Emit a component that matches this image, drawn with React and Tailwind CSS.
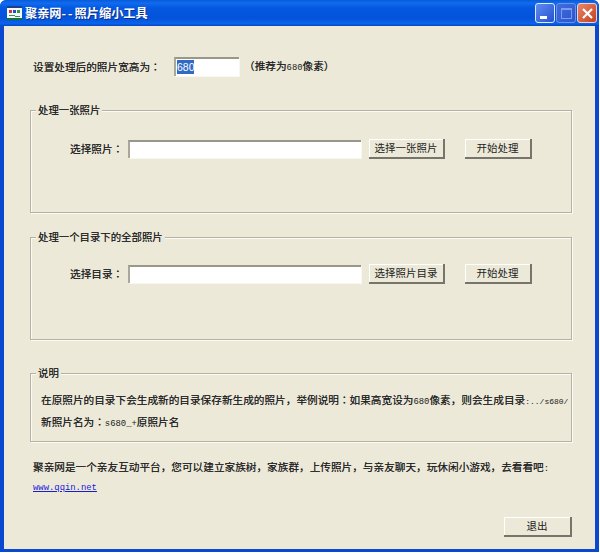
import React from 'react';

const cjk = { fontFamily: '"Noto Sans CJK SC", "Liberation Sans", sans-serif' };

// the original uses half width latin, a mono font gets close
function Latin({ className = 'text-[8.9px]', children }) {
  return <span className={`font-['Liberation_Mono'] [text-shadow:none] ${className}`}>{children}</span>;
}

// centred full width colon, the TC face has it in the middle of the cell
function Colon() {
  return <span className="font-['Noto_Sans_CJK_TC']">：</span>;
}

function TextBox({ className, children }) {
  return (
    <div className={`bg-white border-t-2 border-l-2 border-t-[#99968a] border-l-[#aaa79a] shadow-[1px_1px_0_#f8f7f0] ${className}`}>
      {children}
    </div>
  );
}

function WinButton({ className, children }) {
  return (
    <button className={`flex items-center justify-center bg-[#ece9d8] text-[10.5px] leading-none text-[#222] border-r-2 border-b-2 border-r-[#77756b] border-b-[#77756b] shadow-[inset_1px_1px_0_#fff] ${className}`}>
      {children}
    </button>
  );
}

function Group({ title, className, children }) {
  return (
    <div className={`relative ml-[26px] w-[542px] border border-[#b4b2a4] shadow-[1px_1px_0_#fbfaf4,inset_1px_1px_0_#fbfaf4] ${className}`}>
      <span className="absolute left-[5px] top-[-8px] bg-[#ece9d8] px-[2px] text-[10.4px] leading-[14px] text-[#222]">{title}</span>
      {children}
    </div>
  );
}

function PickRow({ label, button }) {
  return (
    <div className="flex items-center">
      <span className="ml-[39px] w-[58px] text-[10.65px] leading-[14px] text-[#222]">{label}<Colon /></span>
      <TextBox className="w-[233px] h-[18px]" />
      <WinButton className="ml-[8px] w-[76px] h-[20px]">{button}</WinButton>
      <WinButton className="ml-[20px] w-[67px] h-[20px]">开始处理</WinButton>
    </div>
  );
}

function AppIcon() {
  return (
    <svg width="15" height="14" viewBox="0 0 15 14">
      <rect x="0" y="0" width="15" height="14" fill="#f4f8ff" />
      <rect x="0" y="0" width="15" height="2" fill="#1a3f8f" />
      <rect x="2" y="4" width="3" height="3" fill="#d63a2a" />
      <rect x="6" y="4" width="3" height="3" fill="#2a49c4" />
      <rect x="10" y="4" width="3" height="3" fill="#2f9a3c" />
      <rect x="2" y="9" width="6" height="1" fill="#2f9a3c" />
      <rect x="8" y="10" width="5" height="1" fill="#2f9a3c" />
      <rect x="0" y="12" width="15" height="2" fill="#16703a" />
    </svg>
  );
}

function TitleBar() {
  return (
    <div className="flex h-[26px] items-center rounded-t-[6px] bg-[linear-gradient(180deg,#0a5ad8_0%,#0f6cf0_12%,#0558e0_30%,#0453da_70%,#0a62ec_90%,#0348c0_100%)] pl-[7px] pr-[2px]">
      <AppIcon />
      <span className="ml-[3px] text-[12.2px] font-bold leading-none text-white [text-shadow:1px_1px_0_#0a2f8a]">
        聚亲网<span className="tracking-[2px]">--</span>照片缩小工具
      </span>
      <div className="ml-auto flex gap-[1px]">
        <div className="relative flex h-[20px] w-[20px] items-end rounded-[3px] border border-[#dfe8fa] bg-[linear-gradient(135deg,#5f8df0,#2550d0)] pb-[3px] pl-[4px]">
          <div className="h-[3px] w-[7px] bg-white" />
        </div>
        <div className="flex h-[20px] w-[20px] items-center justify-center rounded-[3px] border border-[#6f92e6] bg-[linear-gradient(135deg,#3f6ee0,#2a55cf)]">
          <div className="h-[11px] w-[11px] border border-t-2 border-[#7e9ce8]" />
        </div>
        <div className="flex h-[20px] w-[20px] items-center justify-center rounded-[3px] border border-[#f0d4c8] bg-[linear-gradient(135deg,#e8866a,#c8401c)]">
          <svg width="13" height="13" viewBox="0 0 13 13">
            <path d="M2 2 L11 11 M11 2 L2 11" stroke="#fff" strokeWidth="2.2" />
          </svg>
        </div>
      </div>
    </div>
  );
}

export default function App() {
  return (
    <div className="h-[553px] w-[600px] bg-white [text-shadow:0_0_0.3px_#555]" style={cjk}>
      <div className="h-[552px] w-[599px] overflow-hidden rounded-t-[6px] bg-[#0a48d0]">
        <TitleBar />
        <div className="mb-[3px] ml-[4px] mr-[4px] flex h-[523px] flex-col bg-[#ece9d8]">
          <div className="mt-[31px] flex items-center">
            <span className="ml-[29px] w-[141px] text-[10.65px] leading-[14px] text-[#222]">设置处理后的照片宽高为<Colon /></span>
            <TextBox className="h-[19px] w-[65px] pl-[1px] pt-[1px]">
              <span className="block h-[14px] w-[17px] bg-[#316ac5] text-[10.5px] leading-[14px] text-white [text-shadow:none] font-['Liberation_Sans']">680</span>
            </TextBox>
            <span className="ml-[5px] text-[10.65px] leading-[14px] text-[#222]">（推荐为<Latin>680</Latin>像素）</span>
          </div>

          <Group title="处理一张照片" className="mt-[34px] h-[103px] pt-[28px]">
            <PickRow label="选择照片" button="选择一张照片" />
          </Group>

          <Group title="处理一个目录下的全部照片" className="mt-[24px] h-[103px] pt-[26px]">
            <PickRow label="选择目录" button="选择照片目录" />
          </Group>

          <Group title="说明" className="mt-[33px] h-[69px] pl-[10px] pt-[16px]">
            <p className="whitespace-nowrap text-[10.65px] leading-[20px] text-[#222]">在原照片的目录下会生成新的目录保存新生成的照片，举例说明<Colon />如果高宽设为<Latin>680</Latin>像素，则会生成目录<Latin className="text-[8px]">:../s680/</Latin></p>
            <p className="whitespace-nowrap text-[10.65px] leading-[20px] text-[#222]">新照片名为<Colon /><Latin>s680_+</Latin>原照片名</p>
          </Group>

          <p className="ml-[29px] mt-[18px] whitespace-nowrap text-[10.65px] leading-[14px] text-[#222]">聚亲网是一个亲友互动平台，您可以建立家族树，家族群，上传照片，与亲友聊天，玩休闲小游戏，去看看吧<Latin>:</Latin></p>
          <a className="ml-[29px] mt-[6px] w-fit font-['Liberation_Mono'] text-[8.9px] leading-[13px] text-[#1a1ad8] underline [text-shadow:none]" href="#">www.qqin.net</a>

          <div className="mt-[22px] flex justify-end pr-[23px]">
            <WinButton className="h-[20px] w-[68px]">退出</WinButton>
          </div>
        </div>
      </div>
    </div>
  );
}
